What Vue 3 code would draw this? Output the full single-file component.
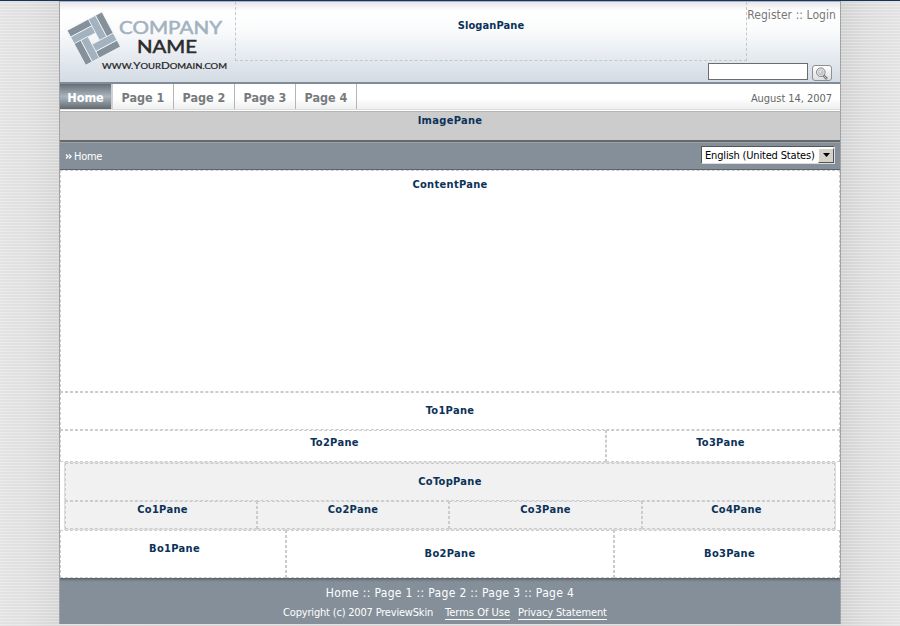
<script setup>
const tabs = ['Home', 'Page 1', 'Page 2', 'Page 3', 'Page 4']
</script>

<template>
  <div class="screen">
    <div class="page">
      <header class="header">
        <div class="brand">
          <svg width="175" height="79" viewBox="0 0 175 79">
            <g transform="translate(33.8 36.600) rotate(-28) scale(.94)" stroke="#f4f6f8" stroke-width=".8">
              <g v-for="a in [0, 90, 180, 270]" :key="a" :transform="`rotate(${a})`">
                <path d="M-21-21H5V-13H-21Z" fill="#84909a" />
                <path d="M-21-13H5V-4.500H-21Z" fill="#a3b2bf" />
              </g>
            </g>
            <text class="cap" x="59" y="32" font-size="16.500" textLength="103" lengthAdjust="spacingAndGlyphs" fill="#a3b2c0" stroke="#a3b2c0" stroke-width=".5">COMPANY</text>
            <text class="cap" x="77" y="50.500" font-size="16.500" textLength="60" lengthAdjust="spacingAndGlyphs" fill="#2b2b2b" stroke="#2b2b2b" stroke-width=".5">NAME</text>
            <text class="cap" x="42" y="66.500" font-size="9.500" textLength="125" lengthAdjust="spacingAndGlyphs" fill="#222" stroke="#222" stroke-width=".2"><tspan font-size="7.800">WWW.</tspan>Y<tspan font-size="7.800">OUR</tspan>D<tspan font-size="7.800">OMAIN.COM</tspan></text>
          </svg>
        </div>
        <div class="slogan"><b>SloganPane</b></div>
        <div class="tools">
          <div class="user">Register :: Login</div>
          <div class="search">
            <input class="box" aria-label="Search">
            <button class="go" aria-label="Go">
              <svg width="14" height="13" viewBox="0 0 14 13">
                <path d="M8.200 8.200L12 12" stroke="#777" stroke-width="2.600" />
                <path d="M8.600 8.600L11.600 11.600" stroke="#ddd" stroke-width=".8" />
                <circle cx="5.800" cy="5.200" r="4.300" fill="#eceef0" stroke="#777" stroke-width=".9" />
                <circle cx="5.800" cy="5.200" r="3" fill="#c3c7cb" />
                <path d="M4 5Q4.500 3.300 6.500 3.300L5.500 6Z" fill="#eee" />
              </svg>
            </button>
          </div>
        </div>
      </header>

      <nav class="nav">
        <a v-for="(t, i) in tabs" :key="t" class="tab" :class="{ active: i === 0 }"><span>{{ t }}</span></a>
        <span class="date">August 14, 2007</span>
      </nav>

      <div class="image-pane"><b>ImagePane</b></div>

      <div class="crumbs">
        <div class="crumb"><svg width="8" height="7" viewBox="0 0 8 7"><path d="M1 1.500L3 3.500L1 5.500M4 1.500L6 3.500L4 5.500" fill="none" stroke="#fff" stroke-width="1.300" /></svg><span>Home</span></div>
        <div class="lang"><span>English (United States)</span><i class="arrow"><svg width="7" height="4"><path d="M0 0H7L3.500 4Z" /></svg></i></div>
      </div>

      <div class="pane content"><b>ContentPane</b></div>
      <div class="pane to1"><b>To1Pane</b></div>
      <div class="row to">
        <div class="pane"><b>To2Pane</b></div>
        <div class="pane"><b>To3Pane</b></div>
      </div>
      <div class="group">
        <div class="pane cotop"><b>CoTopPane</b></div>
        <div class="row co">
          <div v-for="n in 4" :key="n" class="pane"><b>Co{{ n }}Pane</b></div>
        </div>
      </div>
      <div class="row bo">
        <div v-for="n in 3" :key="n" class="pane"><b>Bo{{ n }}Pane</b></div>
      </div>

      <footer class="footer">
        <div class="links">Home :: Page 1 :: Page 2 :: Page 3 :: Page 4</div>
        <div class="legal"><span class="copy">Copyright (c) 2007 PreviewSkin</span><a class="terms">Terms Of Use</a><a class="privacy">Privacy Statement</a></div>
      </footer>
    </div>
  </div>
</template>

<style>
body { margin: 0; overflow: hidden; }
</style>

<style scoped>
* { box-sizing: border-box; }
.screen {
  height: 626px; padding-bottom: 2px; border-top: 1px solid #17335a;
  display: flex; justify-content: center;
  font-family: "DejaVu Sans Condensed", "DejaVu Sans", sans-serif; font-stretch: condensed;
  background:
    repeating-linear-gradient(#fff0 0 2px, #ffffff50 2px 3px),
    linear-gradient(90deg, #e3e3e3, #dfdfdf 30px, #d6d6d6 60px, #d2d2d2 840px, #dcdcdc 865px, #e3e3e3);
}
.page { width: 782px; height: 623px; background: #fff; border: solid #a0a2a5; border-width: 0 1px; display: flex; flex-direction: column; }
b { color: #0b3259; font-size: 11px; line-height: 14px; letter-spacing: .32px; white-space: nowrap; }
.header { height: 83px; display: flex; border-top: 1px solid #a9b2c4; border-bottom: 2px solid #808d98; background: linear-gradient(#e7e7e9, #fff 9px, #fafbfc 28px, #d3dbe4); }
.brand { width: 175px; }
.brand svg { display: block; }
.cap { font-family: Lato, sans-serif; }
.slogan { width: 512px; height: 59px; border: 1px dashed #c4c8cb; border-top: 0; text-align: center; padding-top: 15px; line-height: 14px; }
.slogan b { letter-spacing: .1px; }
.tools { width: 93px; display: flex; flex-direction: column; justify-content: space-between; align-items: flex-end; padding: 5px 8px 1px 0; }
.user { font-size: 12px; line-height: 16px; color: #777; white-space: nowrap; margin-right: -4px; letter-spacing: .07px; }
.search { display: flex; gap: 4px; align-items: flex-start; }
.box { width: 100px; height: 17px; border: 1px solid #6c6c6c; background: #fff; padding: 0; }
.go { width: 20px; height: 16px; margin-top: 2px; padding: 0; border: 1px solid #8f8f8f; border-radius: 3px; background: linear-gradient(#fff, #dedede); display: flex; align-items: center; justify-content: center; }
.nav { height: 27px; display: flex; background: linear-gradient(#fff 14px, #eeefef 25px, #ddd 25px 26px, #fff 26px 27px); }
.tab { width: 61px; height: 25px; border-right: 1px solid #b5b5b5; display: flex; align-items: center; justify-content: center; font: bold 12.500px "DejaVu Sans Condensed", sans-serif; color: #777b7d; padding-top: 2px; white-space: nowrap; }
.tab.active { width: 53px; border-right: 2px solid #d0d0d0; color: #fff; background: linear-gradient(#666e75, #aab5bf 50%, #626a70); }
.date { margin-left: auto; padding: 8px 8px 0 0; font-size: 11px; line-height: 14px; color: #666; letter-spacing: -.05px; }
.image-pane { height: 31px; background: #ccc; border-top: 1px solid #b5b5b5; border-bottom: 2px solid #676a6c; text-align: center; line-height: 14px; }
.crumbs { height: 28px; background: #848f99; border-top: 1px solid #9ca0a3; border-bottom: 1px solid #5e666c; display: flex; justify-content: space-between; padding: 2px 5px; }
.crumb { display: flex; align-items: center; gap: 1px; color: #fff; font-size: 11px; letter-spacing: -.3px; }
.lang { width: 134px; height: 18px; margin-top: 1px; background: #fff; border: 1px solid #555; border-right-color: #ddd; border-bottom-color: #ddd; display: flex; align-items: center; justify-content: space-between; padding: 0 0 0 3px; font-size: 11px; white-space: nowrap; color: #000; letter-spacing: -.17px; }
.arrow { width: 16px; height: 15px; background: #d5d2ca; border: 1px solid #fff; border-right-color: #555; border-bottom-color: #555; display: flex; align-items: center; justify-content: center; }
.pane { border: 1px dashed #ccc; display: flex; justify-content: center; }
.content { height: 222px; padding-top: 7px; }
.to1 { height: 38px; padding-top: 11px; }
.row { display: grid; }
.to { height: 32px; grid-template-columns: 546px 234px; }
.to .pane { padding-top: 5px; }
.to .pane:first-child { padding-left: 3px; }
.to .pane:last-child { padding-right: 5px; }
.group { height: 68px; margin: 0 4px; border: 1px solid #ddd; background: #f1f1f1; }
.cotop { height: 38px; padding-top: 11px; }
.co { height: 28px; grid-template-columns: 192px 192px 193px 193px; }
.co .pane { padding-top: 1px; }
.co .pane:first-child { padding-left: 3px; }
.co .pane:last-child { padding-right: 4px; }
.bo { height: 48px; grid-template-columns: 226px 328px 226px; }
.bo .pane { padding-top: 16px; }
.bo .pane:first-child { padding-top: 11px; padding-left: 3px; }
.bo .pane:last-child { padding-left: 5px; }
.footer { flex: 1; background: linear-gradient(#555c62, #757f88 2px, #848f99 4px); color: #fff; text-align: center; padding-top: 7px; }
.links { font-size: 12px; line-height: 16px; letter-spacing: .33px; }
.legal { display: flex; justify-content: center; font-size: 11px; line-height: 13px; padding-top: 5px; padding-right: 10px; white-space: nowrap; }
.copy { margin-right: 12px; letter-spacing: -.19px; }
.legal a { border-bottom: 1px solid #fff; }
.terms { margin-right: 8px; }
.privacy { letter-spacing: -.13px; }
</style>
